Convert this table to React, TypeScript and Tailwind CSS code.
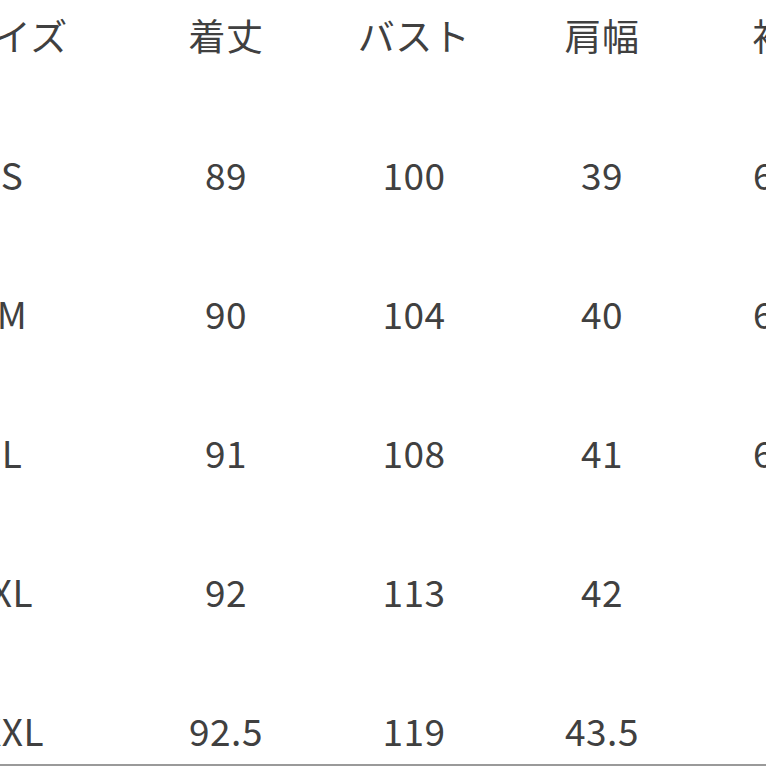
const HEADERS = ['サイズ', '着丈', 'バスト', '肩幅', '袖丈'];

const ROWS: string[][] = [
  ['S', '89', '100', '39', '60.5'],
  ['M', '90', '104', '40', '61.5'],
  ['L', '91', '108', '41', '62.5'],
  ['XL', '92', '113', '42', '64'],
  ['XXL', '92.5', '119', '43.5', '65'],
];

function Row({ cells }: { cells: string[] }) {
  return (
    <div className="flex h-[139px] items-center">
      {cells.map((c, i) => (
        <div
          key={i}
          className={`flex w-[188px] shrink-0 justify-center ${i === 0 ? 'mr-[26px]' : ''}`}
        >
          <span className="whitespace-nowrap">{c}</span>
        </div>
      ))}
    </div>
  );
}

export default function App() {
  return (
    <div
      className="relative h-[766px] w-[766px] overflow-hidden bg-white text-[37px] font-normal leading-none tracking-[0.5px] text-[#404040]"
      style={{ fontFamily: '"Noto Sans CJK JP", "Noto Sans", sans-serif' }}
    >
      <div className="-mt-[34px] -ml-[82px]">
        <Row cells={HEADERS} />
        {ROWS.map((r) => (
          <Row key={r[0]} cells={r} />
        ))}
      </div>
      <div className="absolute bottom-0 left-0 h-[2px] w-full bg-[#9a9a9a]" />
    </div>
  );
}
